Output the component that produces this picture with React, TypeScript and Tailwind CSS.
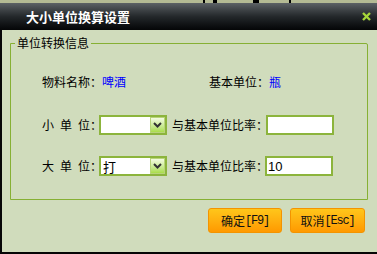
import React from "react";

const cjk = { fontFamily: '"Noto Sans CJK SC", "Liberation Sans", sans-serif' };

function Chevron() {
    return (
        <svg width="9" height="6" viewBox="0 0 9 6">
            <path d="M1 1 L4.5 4.5 L8 1" stroke="#333" strokeWidth="2" fill="none" />
        </svg>
    );
}

function Select({ value }: { value?: string }) {
    return (
        <div className="w-[68px] h-[20px] border-2 border-[#8cb43c] bg-white flex items-center">
            <span className="flex-1 pl-[2px] text-[13px] leading-none text-black">{value}</span>
            <div className="w-[15px] h-[16px] border border-[#b8d47a] bg-gradient-to-b from-[#f4fbe2] to-[#aadd48] flex items-center justify-center">
                <Chevron />
            </div>
        </div>
    );
}

function Input({ value }: { value?: string }) {
    return (
        <div className="w-[68px] h-[20px] border-2 border-[#8cb43c] bg-white flex items-center pl-[1px] text-[13px] leading-none text-black"
            style={{ fontFamily: '"Liberation Sans", sans-serif' }}>
            {value}
        </div>
    );
}

function Label({ ch }: { ch: string }) {
    return (
        <div className="w-[57px] flex whitespace-nowrap">
            <span className="mr-[6px]">{ch}</span>
            <span className="mr-[6px]">单</span>
            <span>位：</span>
        </div>
    );
}

function Btn({ zh, key2 }: { zh: string; key2: string }) {
    return (
        <div className="h-[25px] flex items-center justify-center rounded-[3px] border border-[#f39400] bg-gradient-to-b from-[#ffc61a] to-[#ff9900] text-[#111]">
            <span className="text-[12px] leading-none">{zh}</span>
            <span className="text-[12px] leading-none tracking-[-1.2px]" style={{ fontFamily: '"Liberation Mono", monospace' }}>{key2}</span>
        </div>
    );
}

export default function App() {
    return (
        <div className="w-[377px] h-[254px] flex flex-col bg-[#d0dcbc]" style={cjk}>
            <div className="h-[3px] bg-[#b4ba94] flex">
                <div className="w-[203px]" />
                <div className="w-[2px] bg-black" />
                <div className="w-[8px]" />
                <div className="w-[4px] bg-black" />
                <div className="w-[36px]" />
                <div className="w-[6px] bg-black" />
                <div className="w-[30px]" />
                <div className="w-[2px] bg-black" />
            </div>
            <div className="h-[27px] bg-gradient-to-b from-[#5c6165] via-[#24282b] to-[#050607] flex items-center justify-between pl-[26px] pr-[6px]">
                <span className="text-white font-bold text-[13px] leading-none">大小单位换算设置</span>
                <svg width="9" height="9" viewBox="0 0 9 9">
                    <path d="M1 1 L8 8 M8 1 L1 8" stroke="#a6d63a" strokeWidth="2.4" />
                </svg>
            </div>
            <div className="flex-1 border-l-2 border-b-2 border-[#060606] flex flex-col">
                <div className="relative ml-[8px] mt-[13px] w-[358px] h-[157px] border border-[#86b034] rounded-tr-[2px] pl-[31px] text-[12px] leading-none text-black">
                    <span className="absolute -top-[7px] left-[4px] px-[2px] bg-[#d0dcbc]">单位转换信息</span>
                    <div className="mt-[28px] h-[20px] flex items-center">
                        <div className="w-[167px] flex">
                            <span>物料名称：</span>
                            <span className="text-[#0000ff]">啤酒</span>
                        </div>
                        <span>基本单位：</span>
                        <span className="text-[#0000ff]">瓶</span>
                    </div>
                    <div className="mt-[23px] h-[20px] flex items-center">
                        <Label ch="小" />
                        <Select />
                        <span className="ml-[5px] mr-[-2px]">与基本单位比率：</span>
                        <Input />
                    </div>
                    <div className="mt-[21px] h-[20px] flex items-center">
                        <Label ch="大" />
                        <Select value="打" />
                        <span className="ml-[5px] mr-[-3px]">与基本单位比率：</span>
                        <Input value="10" />
                    </div>
                </div>
                <div className="mt-[8px] flex justify-end gap-[8px] pr-[12px]">
                    <div className="w-[74px]"><Btn zh="确定" key2="[F9]" /></div>
                    <div className="w-[75px]"><Btn zh="取消" key2="[Esc]" /></div>
                </div>
            </div>
        </div>
    );
}
